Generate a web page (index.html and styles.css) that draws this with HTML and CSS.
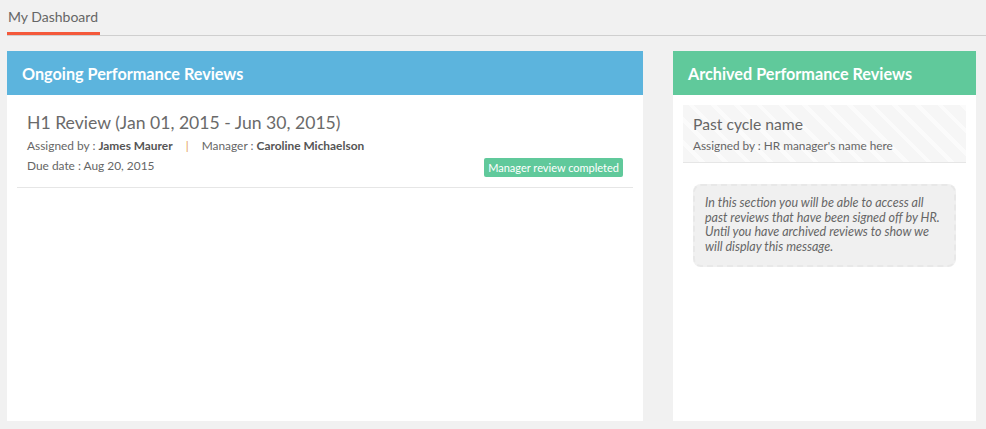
FILE: index.html
```html
<!DOCTYPE html>
<html lang="en">
<head>
    <meta charset="UTF-8">
    <meta name="viewport" content="width=device-width, initial-scale=1.0">
    <title>My Dashboard</title>
    <link rel="stylesheet" href="styles.css">
</head>
<body>
    <div class="tabs">
        <a class="tab active" href="#">My Dashboard</a>
    </div>

    <div class="dashboard">
        <div class="panel panel-ongoing">
            <div class="panel-header">Ongoing Performance Reviews</div>
            <div class="review-item">
                <h2 class="review-title">H1 Review (Jan 01, 2015 - Jun 30, 2015)</h2>
                <div class="review-meta">
                    Assigned by : <b>James Maurer</b>
                    <span class="sep">|</span>
                    Manager : <b>Caroline Michaelson</b>
                </div>
                <div class="review-row">
                    <span class="review-meta">Due date : Aug 20, 2015</span>
                    <span class="badge">Manager review completed</span>
                </div>
            </div>
        </div>

        <div class="panel panel-archived">
            <div class="panel-header">Archived Performance Reviews</div>
            <div class="archive-card">
                <h3 class="archive-title">Past cycle name</h3>
                <div class="archive-meta">Assigned by : HR manager's name here</div>
            </div>
            <div class="empty-note">
                In this section you will be able to access all past reviews that have been signed off by HR. Until you have archived reviews to show we will display this message.
            </div>
        </div>
    </div>
</body>
</html>
```

FILE: styles.css
```css
* {
    margin: 0;
    padding: 0;
    box-sizing: border-box;
    font-family: 'Lato', 'Open Sans', sans-serif;
}

body {
    background: #f1f1f1;
    padding: 0 10px 8px 7px;
    color: #666;
}

.tabs {
    display: flex;
    border-bottom: 1px solid #cfcfcf;
    margin-right: -10px;
    height: 36px;
}

.tab {
    display: block;
    padding: 8px 2px 0 1px;
    font-size: 14px;
    color: #666;
    text-decoration: none;
    border-bottom: 3px solid #f4593b;
    height: 35px;
}

.dashboard {
    display: flex;
    gap: 30px;
    margin-top: 15px;
    height: 370px;
}

.panel {
    background: white;
}

.panel-ongoing {
    width: 636px;
}

.panel-archived {
    flex: 1;
}

.panel-header {
    height: 44px;
    padding: 0 15px;
    display: flex;
    align-items: center;
    color: white;
    font-size: 16.2px;
    font-weight: bold;
}

.panel-ongoing .panel-header {
    background: #5cb4dd;
}

.panel-archived .panel-header {
    background: #60c99b;
}

.review-item {
    margin: 0 10px;
    padding: 17px 10px 10px;
    border-bottom: 1px solid #e6e6e6;
}

.review-title {
    font-size: 17.6px;
    font-weight: normal;
    line-height: 22px;
    color: #6a6a6a;
}

.review-meta {
    font-size: 11.9px;
    line-height: 18px;
    margin-top: 3px;
    color: #666;
}

.review-meta b {
    color: #555;
}

.sep {
    color: #e3a15a;
    margin: 0 10px;
}

.review-row {
    display: flex;
    justify-content: space-between;
    align-items: flex-start;
}

.review-row .review-meta {
    margin-top: 2px;
}

.badge {
    background: #60c99b;
    color: white;
    font-size: 11px;
    line-height: 19px;
    padding: 0 4px;
    border-radius: 2px;
    margin-top: 3px;
}

.archive-card {
    margin: 10px;
    padding: 10px 10px 8px;
    border-bottom: 1px solid #e6e6e6;
    background: repeating-linear-gradient(45deg, #f6f6f6 0, #f6f6f6 12px, #fbfbfb 12px, #fbfbfb 16px);
}

.archive-title {
    font-size: 15.7px;
    font-weight: normal;
    line-height: 18px;
    color: #666;
}

.archive-meta {
    font-size: 11.8px;
    line-height: 16px;
    margin-top: 5px;
    color: #666;
}

.empty-note {
    margin: 21px 20px 0;
    padding: 10px 12px 10px 10px;
    background: #f0f0f0;
    border: 2px dashed #e8e8e8;
    border-radius: 8px;
    font-size: 12.5px;
    font-style: italic;
    line-height: 14.7px;
    color: #666;
}
```
